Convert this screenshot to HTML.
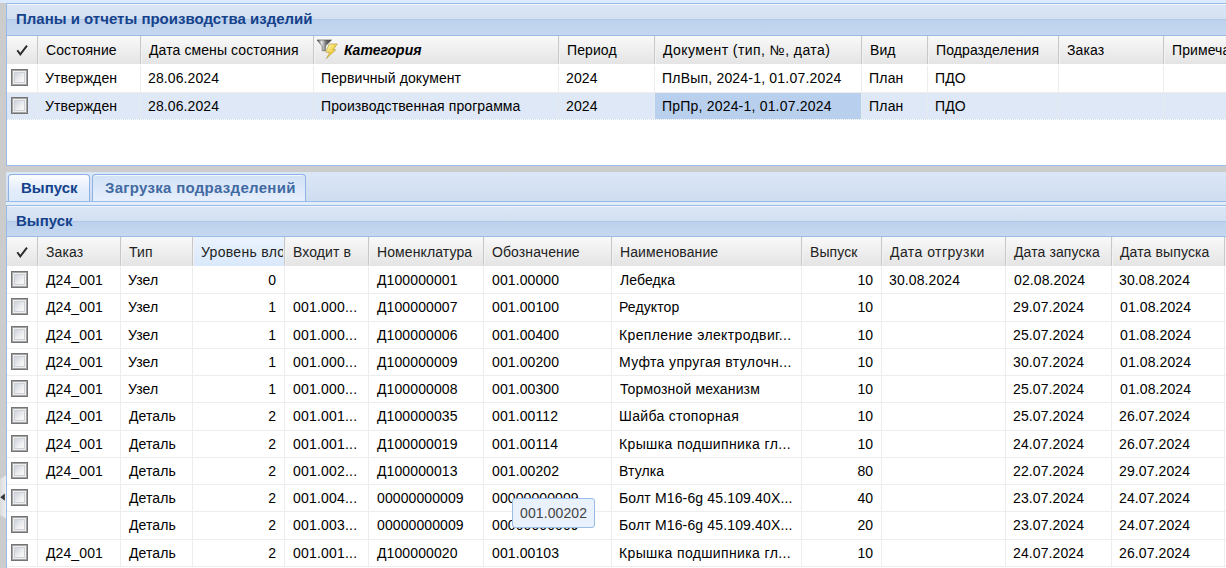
<!DOCTYPE html><html><head><meta charset="utf-8"><style>
*{margin:0;padding:0;box-sizing:border-box}
html,body{width:1226px;height:568px;overflow:hidden}
body{background:#cccccc;position:relative;font-family:"Liberation Sans",sans-serif;font-size:14px;color:#000}
.a{position:absolute}
.t{position:absolute;white-space:nowrap;line-height:16px}
.r{text-align:right}
.gh{background:linear-gradient(#f9f9f9,#e4e4e4)}
.cs{position:absolute;width:2px;border-left:1px solid #c8c8c8;border-right:1px solid #f2f2f2}
.bs{position:absolute;width:1px;background:#ededed}
.cb{position:absolute;width:17px;height:17px;border:1px solid #747474;box-shadow:inset 0 0 0 1px #a4a4a4;background:#eeeeee}
.cb i{position:absolute;left:2px;top:2px;width:11px;height:11px;border:1px solid #cdd1d8;background:linear-gradient(135deg,#cdd2dc,#f3f3f4 70%,#f8f8f8)}
.ht{font-weight:bold;font-size:15px;color:#15428b}
</style></head><body><div class="a" style="left:0;top:0;width:1226px;height:3px;background:#dbeafd"></div>
<div class="a" style="left:6px;top:3px;width:1220px;height:163px;background:#fff;border:1px solid #99bbe8;border-right:none"></div>
<div class="a" style="left:7px;top:4px;width:1219px;height:1px;background:#f2f6fb"></div>
<div class="a" style="left:7px;top:5px;width:1219px;height:14px;background:linear-gradient(#dae6f5,#d3e0f1)"></div>
<div class="a" style="left:7px;top:19px;width:1219px;height:1px;background:#b0c8ea"></div>
<div class="a" style="left:7px;top:20px;width:1219px;height:15px;background:linear-gradient(#bdd1ed,#c6d8f0)"></div>
<div class="a" style="left:7px;top:35px;width:1219px;height:1px;background:#99bbe8"></div>
<div class="t" style="left:16px;top:11px;font-weight:bold;font-size:15px;color:#15428b">Планы и отчеты производства изделий</div>
<div class="a gh" style="left:7px;top:36px;width:1219px;height:28px"></div>
<div class="cs" style="left:37px;top:36px;height:28px"></div>
<div class="cs" style="left:140px;top:36px;height:28px"></div>
<div class="cs" style="left:313px;top:36px;height:28px"></div>
<div class="cs" style="left:558px;top:36px;height:28px"></div>
<div class="cs" style="left:654px;top:36px;height:28px"></div>
<div class="cs" style="left:861px;top:36px;height:28px"></div>
<div class="cs" style="left:927px;top:36px;height:28px"></div>
<div class="cs" style="left:1058px;top:36px;height:28px"></div>
<div class="cs" style="left:1163px;top:36px;height:28px"></div>
<svg class="a" style="left:12px;top:42px" width="20" height="16" viewBox="12 42 20 16"><path d="M17.3 50.3 L20.3 54.4 L27 45.6" fill="none" stroke="#2a2a2a" stroke-width="1.9" stroke-linejoin="miter"/></svg>
<div class="t" style="left:46px;top:42px;letter-spacing:0.1px">Состояние</div>
<div class="t" style="left:149px;top:42px;letter-spacing:0.1px">Дата смены состояния</div>
<div class="t" style="left:567px;top:42px;letter-spacing:0.1px">Период</div>
<div class="t" style="left:663px;top:42px;letter-spacing:0.43px">Документ (тип, №, дата)</div>
<div class="t" style="left:870px;top:42px;letter-spacing:0.1px">Вид</div>
<div class="t" style="left:936px;top:42px;letter-spacing:0.1px">Подразделения</div>
<div class="t" style="left:1067px;top:42px;letter-spacing:0.1px">Заказ</div>
<div class="t" style="left:1172px;top:42px;letter-spacing:0.1px">Примечание</div>
<div class="t" style="left:344px;top:42px;font-weight:bold;font-style:italic">Категория</div>
<svg class="a" style="left:314px;top:37px" width="26" height="24" viewBox="314 37 26 24">
<defs><linearGradient id="fg" x1="0" x2="1"><stop offset="0" stop-color="#404040"/><stop offset=".32" stop-color="#e8e8e8"/><stop offset=".62" stop-color="#707070"/><stop offset="1" stop-color="#303030"/></linearGradient>
<linearGradient id="bg" x1="0" y1="0" x2="1" y2="1"><stop offset="0" stop-color="#fffbd8"/><stop offset=".5" stop-color="#f2d448"/><stop offset="1" stop-color="#d4a420"/></linearGradient></defs>
<path d="M317 40 L331.5 40 L325.4 46 L325.3 50.7 L322.2 50.7 L322.1 46 Z" fill="url(#fg)" stroke="#484848" stroke-width=".6"/>
<path d="M329.2 44 L337.3 44 L333.3 49.4 L335.7 49.8 L326.4 58.6 L329.7 52.5 L325.7 52.1 Z" fill="url(#bg)" stroke="#b09030" stroke-width=".6"/>
</svg>
<div class="a" style="left:7px;top:92px;width:1219px;height:1px;background:#ededed"></div>
<div class="bs" style="left:37px;top:65px;height:28px"></div>
<div class="bs" style="left:140px;top:65px;height:28px"></div>
<div class="bs" style="left:313px;top:65px;height:28px"></div>
<div class="bs" style="left:558px;top:65px;height:28px"></div>
<div class="bs" style="left:654px;top:65px;height:28px"></div>
<div class="bs" style="left:861px;top:65px;height:28px"></div>
<div class="bs" style="left:927px;top:65px;height:28px"></div>
<div class="bs" style="left:1058px;top:65px;height:28px"></div>
<div class="bs" style="left:1163px;top:65px;height:28px"></div>
<div class="a" style="left:7px;top:93px;width:1219px;height:26px;background:#dfe8f6"></div>
<div class="a" style="left:655px;top:93px;width:206px;height:26px;background:#b8cfee"></div>
<div class="a" style="left:7px;top:119px;width:1219px;height:1px;border-top:1px dotted #d5e0f2"></div>
<div class="bs" style="left:37px;top:93px;height:26px;background:#e6eaf0"></div>
<div class="bs" style="left:140px;top:93px;height:26px;background:#e6eaf0"></div>
<div class="bs" style="left:313px;top:93px;height:26px;background:#e6eaf0"></div>
<div class="bs" style="left:558px;top:93px;height:26px;background:#e6eaf0"></div>
<div class="bs" style="left:654px;top:93px;height:26px;background:#e6eaf0"></div>
<div class="bs" style="left:861px;top:93px;height:26px;background:#e6eaf0"></div>
<div class="bs" style="left:927px;top:93px;height:26px;background:#e6eaf0"></div>
<div class="bs" style="left:1058px;top:93px;height:26px;background:#e6eaf0"></div>
<div class="bs" style="left:1163px;top:93px;height:26px;background:#e6eaf0"></div>
<div class="cb" style="left:11px;top:69px"><i></i></div>
<div class="t" style="left:45px;top:70px;letter-spacing:0.1px">Утвержден</div>
<div class="t" style="left:148px;top:70px;letter-spacing:0.1px">28.06.2024</div>
<div class="t" style="left:321px;top:70px;letter-spacing:0.1px">Первичный документ</div>
<div class="t" style="left:566px;top:70px;letter-spacing:0.1px">2024</div>
<div class="t" style="left:662px;top:70px;letter-spacing:0.2px">ПлВып, 2024-1, 01.07.2024</div>
<div class="t" style="left:869px;top:70px;letter-spacing:0.2px">План</div>
<div class="t" style="left:935px;top:70px;letter-spacing:0.1px">ПДО</div>
<div class="cb" style="left:11px;top:97px"><i></i></div>
<div class="t" style="left:45px;top:98px;letter-spacing:0.1px">Утвержден</div>
<div class="t" style="left:148px;top:98px;letter-spacing:0.1px">28.06.2024</div>
<div class="t" style="left:321px;top:98px;letter-spacing:0.1px">Производственная программа</div>
<div class="t" style="left:566px;top:98px;letter-spacing:0.1px">2024</div>
<div class="t" style="left:662px;top:98px;letter-spacing:0.2px">ПрПр, 2024-1, 01.07.2024</div>
<div class="t" style="left:869px;top:98px;letter-spacing:0.2px">План</div>
<div class="t" style="left:935px;top:98px;letter-spacing:0.1px">ПДО</div>
<div class="a" style="left:6px;top:165px;width:1220px;height:1px;background:#99bbe8"></div>
<div class="a" style="left:6px;top:172px;width:1220px;height:29px;background:linear-gradient(#dce7f6,#cedcf1)"></div>
<div class="a" style="left:6px;top:201px;width:1220px;height:1px;background:#99bbe8"></div>
<div class="a" style="left:6px;top:202px;width:1220px;height:3px;background:#e3ecf9"></div>
<div class="a" style="left:8px;top:174px;width:82px;height:27px;border:1px solid #8db2e3;border-bottom:none;border-radius:4px 4px 0 0;background:linear-gradient(#fdfeff,#e3edfb 55%,#dde9fa)"></div>
<div class="t" style="left:21px;top:180px;font-weight:bold;font-size:15px;color:#15428b">Выпуск</div>
<div class="a" style="left:92px;top:174px;width:214px;height:27px;border:1px solid #8db2e3;border-bottom:none;border-radius:4px 4px 0 0;box-shadow:inset 0 1px 0 #f4f8fe;background:linear-gradient(#d3e2f6,#e6effc)"></div>
<div class="t" style="left:105px;top:180px;font-weight:bold;font-size:15px;color:#416aa3;letter-spacing:0.29px">Загрузка подразделений</div>
<div class="a" style="left:6px;top:205px;width:1220px;height:363px;background:#fff;border-left:1px solid #99bbe8;border-top:1px solid #99bbe8"></div>
<div class="a" style="left:7px;top:206px;width:1219px;height:1px;background:#f2f6fb"></div>
<div class="a" style="left:7px;top:207px;width:1219px;height:14px;background:linear-gradient(#dae6f5,#d3e0f1)"></div>
<div class="a" style="left:7px;top:221px;width:1219px;height:1px;background:#b0c8ea"></div>
<div class="a" style="left:7px;top:222px;width:1219px;height:14px;background:linear-gradient(#bdd1ed,#c6d8f0)"></div>
<div class="t" style="left:16px;top:213px;font-weight:bold;font-size:15px;color:#15428b">Выпуск</div>
<div class="a" style="left:7px;top:236px;width:1219px;height:1px;background:#99bbe8"></div>
<div class="a gh" style="left:7px;top:237px;width:1219px;height:29px"></div>
<div class="a" style="left:193px;top:237px;width:91px;height:29px;background:linear-gradient(#ebf3fd,#d9e8fb)"></div>
<div class="cs" style="left:37px;top:237px;height:29px"></div>
<div class="cs" style="left:120px;top:237px;height:29px"></div>
<div class="cs" style="left:192px;top:237px;height:29px"></div>
<div class="cs" style="left:284px;top:237px;height:29px"></div>
<div class="cs" style="left:368px;top:237px;height:29px"></div>
<div class="cs" style="left:483px;top:237px;height:29px"></div>
<div class="cs" style="left:611px;top:237px;height:29px"></div>
<div class="cs" style="left:801px;top:237px;height:29px"></div>
<div class="cs" style="left:881px;top:237px;height:29px"></div>
<div class="cs" style="left:1005px;top:237px;height:29px"></div>
<div class="cs" style="left:1111px;top:237px;height:29px"></div>
<div class="cs" style="left:1224px;top:237px;height:29px"></div>
<svg class="a" style="left:12px;top:244px" width="20" height="16" viewBox="12 42 20 16"><path d="M17.3 50.3 L20.3 54.4 L27 45.6" fill="none" stroke="#2a2a2a" stroke-width="1.9" stroke-linejoin="miter"/></svg>
<div class="t" style="left:46px;top:244px;color:#222;letter-spacing:0.1px">Заказ</div>
<div class="t" style="left:129px;top:244px;color:#222;letter-spacing:0.1px">Тип</div>
<div class="t" style="left:201px;top:244px;color:#222;overflow:hidden;width:82px;letter-spacing:0.3px">Уровень вло</div>
<div class="t" style="left:293px;top:244px;color:#222;letter-spacing:0.1px">Входит в</div>
<div class="t" style="left:377px;top:244px;color:#222;letter-spacing:0.1px">Номенклатура</div>
<div class="t" style="left:492px;top:244px;color:#222;letter-spacing:0.1px">Обозначение</div>
<div class="t" style="left:620px;top:244px;color:#222;letter-spacing:0.1px">Наименование</div>
<div class="t" style="left:810px;top:244px;color:#222;letter-spacing:0.1px">Выпуск</div>
<div class="t" style="left:890px;top:244px;color:#222;letter-spacing:0.45px">Дата отгрузки</div>
<div class="t" style="left:1014px;top:244px;color:#222;letter-spacing:0.1px">Дата запуска</div>
<div class="t" style="left:1120px;top:244px;color:#222;letter-spacing:0.12px">Дата выпуска</div>
<div class="a" style="left:7px;top:293px;width:1219px;height:1px;background:#ededed"></div>
<div class="bs" style="left:37px;top:267px;height:27px"></div>
<div class="bs" style="left:120px;top:267px;height:27px"></div>
<div class="bs" style="left:192px;top:267px;height:27px"></div>
<div class="bs" style="left:284px;top:267px;height:27px"></div>
<div class="bs" style="left:368px;top:267px;height:27px"></div>
<div class="bs" style="left:483px;top:267px;height:27px"></div>
<div class="bs" style="left:611px;top:267px;height:27px"></div>
<div class="bs" style="left:801px;top:267px;height:27px"></div>
<div class="bs" style="left:881px;top:267px;height:27px"></div>
<div class="bs" style="left:1005px;top:267px;height:27px"></div>
<div class="bs" style="left:1111px;top:267px;height:27px"></div>
<div class="bs" style="left:1224px;top:267px;height:27px"></div>
<div class="cb" style="left:11px;top:271px"><i></i></div>
<div class="t" style="left:46px;top:272px;letter-spacing:0.1px">Д24_001</div>
<div class="t" style="left:128px;top:272px;letter-spacing:0.1px">Узел</div>
<div class="t r" style="left:216px;width:60px;top:272px">0</div>
<div class="t" style="left:377px;top:272px;letter-spacing:0.1px">Д100000001</div>
<div class="t" style="left:492px;top:272px;letter-spacing:0.1px">001.00000</div>
<div class="t" style="left:620px;top:272px;letter-spacing:0.1px">Лебедка</div>
<div class="t r" style="left:813px;width:60px;top:272px">10</div>
<div class="t" style="left:889px;top:272px;letter-spacing:0.1px">30.08.2024</div>
<div class="t" style="left:1014px;top:272px;letter-spacing:0.1px">02.08.2024</div>
<div class="t" style="left:1119px;top:272px;letter-spacing:0.1px">30.08.2024</div>
<div class="a" style="left:7px;top:321px;width:1219px;height:1px;background:#ededed"></div>
<div class="bs" style="left:37px;top:294px;height:28px"></div>
<div class="bs" style="left:120px;top:294px;height:28px"></div>
<div class="bs" style="left:192px;top:294px;height:28px"></div>
<div class="bs" style="left:284px;top:294px;height:28px"></div>
<div class="bs" style="left:368px;top:294px;height:28px"></div>
<div class="bs" style="left:483px;top:294px;height:28px"></div>
<div class="bs" style="left:611px;top:294px;height:28px"></div>
<div class="bs" style="left:801px;top:294px;height:28px"></div>
<div class="bs" style="left:881px;top:294px;height:28px"></div>
<div class="bs" style="left:1005px;top:294px;height:28px"></div>
<div class="bs" style="left:1111px;top:294px;height:28px"></div>
<div class="bs" style="left:1224px;top:294px;height:28px"></div>
<div class="cb" style="left:11px;top:298px"><i></i></div>
<div class="t" style="left:46px;top:299px;letter-spacing:0.1px">Д24_001</div>
<div class="t" style="left:128px;top:299px;letter-spacing:0.1px">Узел</div>
<div class="t r" style="left:216px;width:60px;top:299px">1</div>
<div class="t" style="left:293px;top:299px;letter-spacing:0.2px">001.000...</div>
<div class="t" style="left:377px;top:299px;letter-spacing:0.1px">Д100000007</div>
<div class="t" style="left:492px;top:299px;letter-spacing:0.1px">001.00100</div>
<div class="t" style="left:619px;top:299px;letter-spacing:0.1px">Редуктор</div>
<div class="t r" style="left:813px;width:60px;top:299px">10</div>
<div class="t" style="left:1013px;top:299px;letter-spacing:0.1px">29.07.2024</div>
<div class="t" style="left:1120px;top:299px;letter-spacing:0.1px">01.08.2024</div>
<div class="a" style="left:7px;top:348px;width:1219px;height:1px;background:#ededed"></div>
<div class="bs" style="left:37px;top:322px;height:27px"></div>
<div class="bs" style="left:120px;top:322px;height:27px"></div>
<div class="bs" style="left:192px;top:322px;height:27px"></div>
<div class="bs" style="left:284px;top:322px;height:27px"></div>
<div class="bs" style="left:368px;top:322px;height:27px"></div>
<div class="bs" style="left:483px;top:322px;height:27px"></div>
<div class="bs" style="left:611px;top:322px;height:27px"></div>
<div class="bs" style="left:801px;top:322px;height:27px"></div>
<div class="bs" style="left:881px;top:322px;height:27px"></div>
<div class="bs" style="left:1005px;top:322px;height:27px"></div>
<div class="bs" style="left:1111px;top:322px;height:27px"></div>
<div class="bs" style="left:1224px;top:322px;height:27px"></div>
<div class="cb" style="left:11px;top:326px"><i></i></div>
<div class="t" style="left:46px;top:327px;letter-spacing:0.1px">Д24_001</div>
<div class="t" style="left:128px;top:327px;letter-spacing:0.1px">Узел</div>
<div class="t r" style="left:216px;width:60px;top:327px">1</div>
<div class="t" style="left:293px;top:327px;letter-spacing:0.2px">001.000...</div>
<div class="t" style="left:377px;top:327px;letter-spacing:0.1px">Д100000006</div>
<div class="t" style="left:492px;top:327px;letter-spacing:0.1px">001.00400</div>
<div class="t" style="left:619px;top:327px;letter-spacing:0.37px">Крепление электродвиг...</div>
<div class="t r" style="left:813px;width:60px;top:327px">10</div>
<div class="t" style="left:1013px;top:327px;letter-spacing:0.1px">25.07.2024</div>
<div class="t" style="left:1120px;top:327px;letter-spacing:0.1px">01.08.2024</div>
<div class="a" style="left:7px;top:375px;width:1219px;height:1px;background:#ededed"></div>
<div class="bs" style="left:37px;top:349px;height:27px"></div>
<div class="bs" style="left:120px;top:349px;height:27px"></div>
<div class="bs" style="left:192px;top:349px;height:27px"></div>
<div class="bs" style="left:284px;top:349px;height:27px"></div>
<div class="bs" style="left:368px;top:349px;height:27px"></div>
<div class="bs" style="left:483px;top:349px;height:27px"></div>
<div class="bs" style="left:611px;top:349px;height:27px"></div>
<div class="bs" style="left:801px;top:349px;height:27px"></div>
<div class="bs" style="left:881px;top:349px;height:27px"></div>
<div class="bs" style="left:1005px;top:349px;height:27px"></div>
<div class="bs" style="left:1111px;top:349px;height:27px"></div>
<div class="bs" style="left:1224px;top:349px;height:27px"></div>
<div class="cb" style="left:11px;top:353px"><i></i></div>
<div class="t" style="left:46px;top:354px;letter-spacing:0.1px">Д24_001</div>
<div class="t" style="left:128px;top:354px;letter-spacing:0.1px">Узел</div>
<div class="t r" style="left:216px;width:60px;top:354px">1</div>
<div class="t" style="left:293px;top:354px;letter-spacing:0.2px">001.000...</div>
<div class="t" style="left:377px;top:354px;letter-spacing:0.1px">Д100000009</div>
<div class="t" style="left:492px;top:354px;letter-spacing:0.1px">001.00200</div>
<div class="t" style="left:619px;top:354px;letter-spacing:0.37px">Муфта упругая втулочн...</div>
<div class="t r" style="left:813px;width:60px;top:354px">10</div>
<div class="t" style="left:1013px;top:354px;letter-spacing:0.1px">30.07.2024</div>
<div class="t" style="left:1120px;top:354px;letter-spacing:0.1px">01.08.2024</div>
<div class="a" style="left:7px;top:402px;width:1219px;height:1px;background:#ededed"></div>
<div class="bs" style="left:37px;top:376px;height:27px"></div>
<div class="bs" style="left:120px;top:376px;height:27px"></div>
<div class="bs" style="left:192px;top:376px;height:27px"></div>
<div class="bs" style="left:284px;top:376px;height:27px"></div>
<div class="bs" style="left:368px;top:376px;height:27px"></div>
<div class="bs" style="left:483px;top:376px;height:27px"></div>
<div class="bs" style="left:611px;top:376px;height:27px"></div>
<div class="bs" style="left:801px;top:376px;height:27px"></div>
<div class="bs" style="left:881px;top:376px;height:27px"></div>
<div class="bs" style="left:1005px;top:376px;height:27px"></div>
<div class="bs" style="left:1111px;top:376px;height:27px"></div>
<div class="bs" style="left:1224px;top:376px;height:27px"></div>
<div class="cb" style="left:11px;top:380px"><i></i></div>
<div class="t" style="left:46px;top:381px;letter-spacing:0.1px">Д24_001</div>
<div class="t" style="left:128px;top:381px;letter-spacing:0.1px">Узел</div>
<div class="t r" style="left:216px;width:60px;top:381px">1</div>
<div class="t" style="left:293px;top:381px;letter-spacing:0.2px">001.000...</div>
<div class="t" style="left:377px;top:381px;letter-spacing:0.1px">Д100000008</div>
<div class="t" style="left:492px;top:381px;letter-spacing:0.1px">001.00300</div>
<div class="t" style="left:620px;top:381px;letter-spacing:0.15px">Тормозной механизм</div>
<div class="t r" style="left:813px;width:60px;top:381px">10</div>
<div class="t" style="left:1013px;top:381px;letter-spacing:0.1px">25.07.2024</div>
<div class="t" style="left:1120px;top:381px;letter-spacing:0.1px">01.08.2024</div>
<div class="a" style="left:7px;top:430px;width:1219px;height:1px;background:#ededed"></div>
<div class="bs" style="left:37px;top:403px;height:28px"></div>
<div class="bs" style="left:120px;top:403px;height:28px"></div>
<div class="bs" style="left:192px;top:403px;height:28px"></div>
<div class="bs" style="left:284px;top:403px;height:28px"></div>
<div class="bs" style="left:368px;top:403px;height:28px"></div>
<div class="bs" style="left:483px;top:403px;height:28px"></div>
<div class="bs" style="left:611px;top:403px;height:28px"></div>
<div class="bs" style="left:801px;top:403px;height:28px"></div>
<div class="bs" style="left:881px;top:403px;height:28px"></div>
<div class="bs" style="left:1005px;top:403px;height:28px"></div>
<div class="bs" style="left:1111px;top:403px;height:28px"></div>
<div class="bs" style="left:1224px;top:403px;height:28px"></div>
<div class="cb" style="left:11px;top:407px"><i></i></div>
<div class="t" style="left:46px;top:408px;letter-spacing:0.1px">Д24_001</div>
<div class="t" style="left:129px;top:408px;letter-spacing:0.1px">Деталь</div>
<div class="t r" style="left:216px;width:60px;top:408px">2</div>
<div class="t" style="left:293px;top:408px;letter-spacing:0.2px">001.001...</div>
<div class="t" style="left:377px;top:408px;letter-spacing:0.1px">Д100000035</div>
<div class="t" style="left:492px;top:408px;letter-spacing:0.1px">001.00112</div>
<div class="t" style="left:619px;top:408px;letter-spacing:0.33px">Шайба стопорная</div>
<div class="t r" style="left:813px;width:60px;top:408px">10</div>
<div class="t" style="left:1013px;top:408px;letter-spacing:0.1px">25.07.2024</div>
<div class="t" style="left:1119px;top:408px;letter-spacing:0.1px">26.07.2024</div>
<div class="a" style="left:7px;top:457px;width:1219px;height:1px;background:#ededed"></div>
<div class="bs" style="left:37px;top:431px;height:27px"></div>
<div class="bs" style="left:120px;top:431px;height:27px"></div>
<div class="bs" style="left:192px;top:431px;height:27px"></div>
<div class="bs" style="left:284px;top:431px;height:27px"></div>
<div class="bs" style="left:368px;top:431px;height:27px"></div>
<div class="bs" style="left:483px;top:431px;height:27px"></div>
<div class="bs" style="left:611px;top:431px;height:27px"></div>
<div class="bs" style="left:801px;top:431px;height:27px"></div>
<div class="bs" style="left:881px;top:431px;height:27px"></div>
<div class="bs" style="left:1005px;top:431px;height:27px"></div>
<div class="bs" style="left:1111px;top:431px;height:27px"></div>
<div class="bs" style="left:1224px;top:431px;height:27px"></div>
<div class="cb" style="left:11px;top:435px"><i></i></div>
<div class="t" style="left:46px;top:436px;letter-spacing:0.1px">Д24_001</div>
<div class="t" style="left:129px;top:436px;letter-spacing:0.1px">Деталь</div>
<div class="t r" style="left:216px;width:60px;top:436px">2</div>
<div class="t" style="left:293px;top:436px;letter-spacing:0.2px">001.001...</div>
<div class="t" style="left:377px;top:436px;letter-spacing:0.1px">Д100000019</div>
<div class="t" style="left:492px;top:436px;letter-spacing:0.1px">001.00114</div>
<div class="t" style="left:619px;top:436px;letter-spacing:0.37px">Крышка подшипника гл...</div>
<div class="t r" style="left:813px;width:60px;top:436px">10</div>
<div class="t" style="left:1013px;top:436px;letter-spacing:0.1px">24.07.2024</div>
<div class="t" style="left:1119px;top:436px;letter-spacing:0.1px">26.07.2024</div>
<div class="a" style="left:7px;top:484px;width:1219px;height:1px;background:#ededed"></div>
<div class="bs" style="left:37px;top:458px;height:27px"></div>
<div class="bs" style="left:120px;top:458px;height:27px"></div>
<div class="bs" style="left:192px;top:458px;height:27px"></div>
<div class="bs" style="left:284px;top:458px;height:27px"></div>
<div class="bs" style="left:368px;top:458px;height:27px"></div>
<div class="bs" style="left:483px;top:458px;height:27px"></div>
<div class="bs" style="left:611px;top:458px;height:27px"></div>
<div class="bs" style="left:801px;top:458px;height:27px"></div>
<div class="bs" style="left:881px;top:458px;height:27px"></div>
<div class="bs" style="left:1005px;top:458px;height:27px"></div>
<div class="bs" style="left:1111px;top:458px;height:27px"></div>
<div class="bs" style="left:1224px;top:458px;height:27px"></div>
<div class="cb" style="left:11px;top:462px"><i></i></div>
<div class="t" style="left:46px;top:463px;letter-spacing:0.1px">Д24_001</div>
<div class="t" style="left:129px;top:463px;letter-spacing:0.1px">Деталь</div>
<div class="t r" style="left:216px;width:60px;top:463px">2</div>
<div class="t" style="left:293px;top:463px;letter-spacing:0.2px">001.002...</div>
<div class="t" style="left:377px;top:463px;letter-spacing:0.1px">Д100000013</div>
<div class="t" style="left:492px;top:463px;letter-spacing:0.1px">001.00202</div>
<div class="t" style="left:619px;top:463px;letter-spacing:0.1px">Втулка</div>
<div class="t r" style="left:813px;width:60px;top:463px">80</div>
<div class="t" style="left:1013px;top:463px;letter-spacing:0.1px">22.07.2024</div>
<div class="t" style="left:1119px;top:463px;letter-spacing:0.1px">29.07.2024</div>
<div class="a" style="left:7px;top:511px;width:1219px;height:1px;background:#ededed"></div>
<div class="bs" style="left:37px;top:485px;height:27px"></div>
<div class="bs" style="left:120px;top:485px;height:27px"></div>
<div class="bs" style="left:192px;top:485px;height:27px"></div>
<div class="bs" style="left:284px;top:485px;height:27px"></div>
<div class="bs" style="left:368px;top:485px;height:27px"></div>
<div class="bs" style="left:483px;top:485px;height:27px"></div>
<div class="bs" style="left:611px;top:485px;height:27px"></div>
<div class="bs" style="left:801px;top:485px;height:27px"></div>
<div class="bs" style="left:881px;top:485px;height:27px"></div>
<div class="bs" style="left:1005px;top:485px;height:27px"></div>
<div class="bs" style="left:1111px;top:485px;height:27px"></div>
<div class="bs" style="left:1224px;top:485px;height:27px"></div>
<div class="cb" style="left:11px;top:489px"><i></i></div>
<div class="t" style="left:129px;top:490px;letter-spacing:0.1px">Деталь</div>
<div class="t r" style="left:216px;width:60px;top:490px">2</div>
<div class="t" style="left:293px;top:490px;letter-spacing:0.2px">001.004...</div>
<div class="t" style="left:377px;top:490px;letter-spacing:0.1px">00000000009</div>
<div class="t" style="left:492px;top:490px;letter-spacing:0.1px">00000000009</div>
<div class="t" style="left:619px;top:490px;letter-spacing:0.15px">Болт М16-6g 45.109.40X...</div>
<div class="t r" style="left:813px;width:60px;top:490px">40</div>
<div class="t" style="left:1013px;top:490px;letter-spacing:0.1px">23.07.2024</div>
<div class="t" style="left:1119px;top:490px;letter-spacing:0.1px">24.07.2024</div>
<div class="a" style="left:7px;top:539px;width:1219px;height:1px;background:#ededed"></div>
<div class="bs" style="left:37px;top:512px;height:28px"></div>
<div class="bs" style="left:120px;top:512px;height:28px"></div>
<div class="bs" style="left:192px;top:512px;height:28px"></div>
<div class="bs" style="left:284px;top:512px;height:28px"></div>
<div class="bs" style="left:368px;top:512px;height:28px"></div>
<div class="bs" style="left:483px;top:512px;height:28px"></div>
<div class="bs" style="left:611px;top:512px;height:28px"></div>
<div class="bs" style="left:801px;top:512px;height:28px"></div>
<div class="bs" style="left:881px;top:512px;height:28px"></div>
<div class="bs" style="left:1005px;top:512px;height:28px"></div>
<div class="bs" style="left:1111px;top:512px;height:28px"></div>
<div class="bs" style="left:1224px;top:512px;height:28px"></div>
<div class="cb" style="left:11px;top:516px"><i></i></div>
<div class="t" style="left:129px;top:517px;letter-spacing:0.1px">Деталь</div>
<div class="t r" style="left:216px;width:60px;top:517px">2</div>
<div class="t" style="left:293px;top:517px;letter-spacing:0.2px">001.003...</div>
<div class="t" style="left:377px;top:517px;letter-spacing:0.1px">00000000009</div>
<div class="t" style="left:492px;top:517px;letter-spacing:0.1px">00000000009</div>
<div class="t" style="left:619px;top:517px;letter-spacing:0.15px">Болт М16-6g 45.109.40X...</div>
<div class="t r" style="left:813px;width:60px;top:517px">20</div>
<div class="t" style="left:1013px;top:517px;letter-spacing:0.1px">23.07.2024</div>
<div class="t" style="left:1119px;top:517px;letter-spacing:0.1px">24.07.2024</div>
<div class="a" style="left:7px;top:566px;width:1219px;height:1px;background:#ededed"></div>
<div class="bs" style="left:37px;top:540px;height:27px"></div>
<div class="bs" style="left:120px;top:540px;height:27px"></div>
<div class="bs" style="left:192px;top:540px;height:27px"></div>
<div class="bs" style="left:284px;top:540px;height:27px"></div>
<div class="bs" style="left:368px;top:540px;height:27px"></div>
<div class="bs" style="left:483px;top:540px;height:27px"></div>
<div class="bs" style="left:611px;top:540px;height:27px"></div>
<div class="bs" style="left:801px;top:540px;height:27px"></div>
<div class="bs" style="left:881px;top:540px;height:27px"></div>
<div class="bs" style="left:1005px;top:540px;height:27px"></div>
<div class="bs" style="left:1111px;top:540px;height:27px"></div>
<div class="bs" style="left:1224px;top:540px;height:27px"></div>
<div class="cb" style="left:11px;top:544px"><i></i></div>
<div class="t" style="left:46px;top:545px;letter-spacing:0.1px">Д24_001</div>
<div class="t" style="left:129px;top:545px;letter-spacing:0.1px">Деталь</div>
<div class="t r" style="left:216px;width:60px;top:545px">2</div>
<div class="t" style="left:293px;top:545px;letter-spacing:0.2px">001.001...</div>
<div class="t" style="left:377px;top:545px;letter-spacing:0.1px">Д100000020</div>
<div class="t" style="left:492px;top:545px;letter-spacing:0.1px">001.00103</div>
<div class="t" style="left:619px;top:545px;letter-spacing:0.37px">Крышка подшипника гл...</div>
<div class="t r" style="left:813px;width:60px;top:545px">10</div>
<div class="t" style="left:1013px;top:545px;letter-spacing:0.1px">24.07.2024</div>
<div class="t" style="left:1119px;top:545px;letter-spacing:0.1px">26.07.2024</div>
<svg class="a" style="left:0;top:470px" width="6" height="54" viewBox="0 470 6 54"><defs><linearGradient id="mg" x1="0" x2="1"><stop offset="0" stop-color="#dcdcdc"/><stop offset="1" stop-color="#eeeeee"/></linearGradient></defs><path d="M0 479 L6 475.6 L6 518.4 L0 515 Z" fill="url(#mg)"/><path d="M0.3 497.2 L4.8 493.6 L4.8 500.8 Z" fill="#333"/></svg>
<div class="a" style="left:512px;top:498px;width:83px;height:30px;border:1px solid #99bbe8;border-radius:3px;background:#e9f1fc"></div>
<div class="t" style="left:520px;top:505px;color:#444;letter-spacing:0.1px">001.00202</div></body></html>
